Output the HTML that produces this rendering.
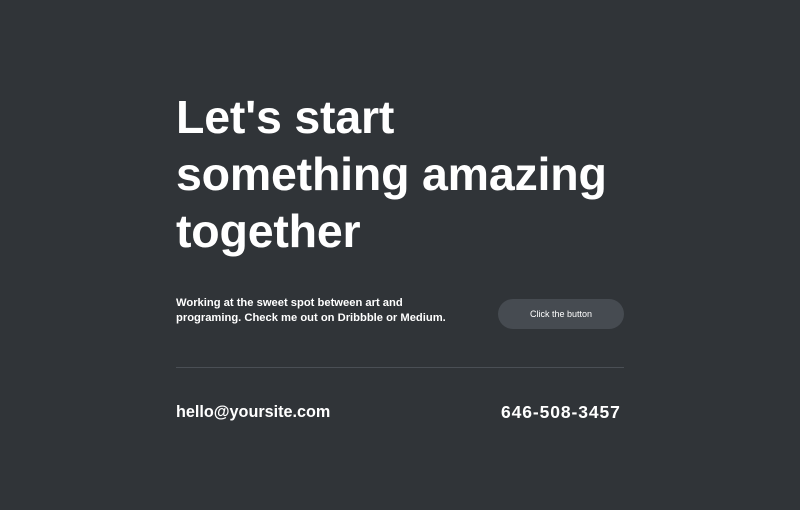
<!DOCTYPE html>
<html><head><meta charset="utf-8"><style>
body{margin:0;width:800px;height:510px;background:#303438;font-family:"Liberation Sans",sans-serif;color:#fff;position:relative;overflow:hidden}
h1{position:absolute;left:176px;top:89px;margin:0;font-size:46.5px;line-height:57px;font-weight:bold;letter-spacing:-0.2px}
.p{position:absolute;left:176px;top:296px;font-size:11.2px;font-weight:bold;line-height:15px}
.btn{position:absolute;left:498px;top:299px;width:126px;height:30px;border-radius:15px;background:#464b51;font-size:9px;text-align:center;line-height:30px}
.hr{position:absolute;left:176px;top:367px;width:448px;height:1px;background:#4a4f55}
.e{position:absolute;left:176px;top:403px;font-size:16.2px;font-weight:bold}
.t{position:absolute;left:501px;top:402px;font-size:17.5px;font-weight:bold;letter-spacing:0.9px}
</style></head><body>
<h1>Let's start<br>something amazing<br>together</h1>
<div class="p">Working at the sweet spot between art and<br>programing. Check me out on Dribbble or Medium.</div>
<div class="btn">Click the button</div>
<div class="hr"></div>
<div class="e">hello@yoursite.com</div>
<div class="t">646-508-3457</div>
</body></html>
